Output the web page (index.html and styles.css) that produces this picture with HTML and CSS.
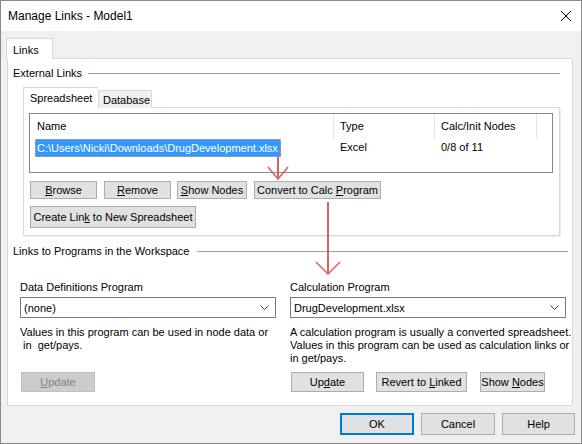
FILE: index.html
```html
<!DOCTYPE html>
<html>
<head>
<meta charset="utf-8">
<title>Manage Links - Model1</title>
<link rel="stylesheet" href="styles.css">
</head>
<body>
<div class="win">
  <div class="titlebar">
    <span class="title">Manage Links - Model1</span>
    <svg class="close" width="12" height="12" viewBox="0 0 12 12"><path d="M1 1 L11 11 M11 1 L1 11" stroke="#000" stroke-width="1" fill="none"/></svg>
  </div>
  <div class="body">
    <div class="tabs">
      <div class="tab sel">Links</div>
    </div>
    <div class="panel">
      <div class="grouphdr g1"><span>External Links</span><i class="rule"></i></div>
      <div class="itabs">
        <div class="itab sel">Spreadsheet</div>
        <div class="itab">Database</div>
      </div>
      <div class="ipanel">
        <div class="list">
          <div class="lhead">
            <div class="hc">Name</div>
            <div class="hc">Type</div>
            <div class="hc">Calc/Init Nodes</div>
          </div>
          <div class="lrow">
            <div class="rc"><span class="selname">C:\Users\Nicki\Downloads\DrugDevelopment.xlsx</span></div>
            <div class="rc">Excel</div>
            <div class="rc">0/8 of 11</div>
          </div>
        </div>
        <div class="brow r1">
          <button class="btn w-browse"><u>B</u>rowse</button>
          <button class="btn w-remove"><u>R</u>emove</button>
          <button class="btn w-shownodes"><u>S</u>how Nodes</button>
          <button class="btn w-convert">Convert to Calc <u>P</u>rogram</button>
        </div>
        <div class="brow r2">
          <button class="btn w-create">Create Lin<u>k</u> to New Spreadsheet</button>
        </div>
      </div>
      <div class="grouphdr g2"><span>Links to Programs in the Workspace</span><i class="rule"></i></div>
      <div class="cols">
        <div class="col left">
          <div class="lbl">Data Definitions Program</div>
          <div class="combo"><span>(none)</span><svg class="chev" width="9" height="5" viewBox="0 0 9 5"><path d="M0.5 0.5 L4.5 4.5 L8.5 0.5" stroke="#444" fill="none"/></svg></div>
          <div class="desc">Values in this program can be used in node data or<br> in  get/pays.</div>
          <div class="brow r3">
            <button class="btn dis w-upd1"><u>U</u>pdate</button>
          </div>
        </div>
        <div class="col right">
          <div class="lbl">Calculation Program</div>
          <div class="combo"><span>DrugDevelopment.xlsx</span><svg class="chev" width="9" height="5" viewBox="0 0 9 5"><path d="M0.5 0.5 L4.5 4.5 L8.5 0.5" stroke="#444" fill="none"/></svg></div>
          <div class="desc">A calculation program is usually a converted spreadsheet.<br>Values in this program can be used as calculation links or<br>in get/pays.</div>
          <div class="brow r3">
            <button class="btn w-upd2">Up<u>d</u>ate</button>
            <button class="btn w-revert">Revert to <u>L</u>inked</button>
            <button class="btn w-shown2">Show <u>N</u>odes</button>
          </div>
        </div>
      </div>
    </div>
    <div class="footer">
      <button class="btn fbtn ok">OK</button>
      <button class="btn fbtn">Cancel</button>
      <button class="btn fbtn help">Help</button>
    </div>
  </div>
  <svg class="arrows" width="582" height="444" viewBox="0 0 582 444">
    <g stroke="#e0605f" fill="none">
      <path d="M278 157 L278 179" stroke-width="2"/>
      <path d="M268 167 L278 179 L288 167" stroke-width="1.5"/>
      <path d="M328 202 L328 274" stroke-width="2"/>
      <path d="M316 262 L328 274 L340 262" stroke-width="1.5"/>
    </g>
  </svg>
</div>
</body>
</html>
```
FILE: styles.css
```css
* { box-sizing: border-box; }
html, body { margin: 0; padding: 0; }
body { width: 582px; height: 444px; overflow: hidden; font-family: "Liberation Sans", Arial, sans-serif; font-size: 11px; color: #000; }

.win { position: relative; width: 582px; height: 444px; border: 1px solid #8a8a8a; display: flex; flex-direction: column; background: #f0f0f0; }

.titlebar { height: 30px; background: #fff; display: flex; align-items: center; padding-left: 7px; }
.title { font-size: 12px; flex: 1; }
.close { margin-right: 9px; }

.body { flex: 1; padding-top: 7px; display: flex; flex-direction: column; }

.tabs { display: flex; padding-left: 5px; height: 20px; }
.tab { width: 47px; height: 21px; border: 1px solid #d9d9d9; border-bottom: none; background: #fff; padding: 5px 0 0 6px; position: relative; z-index: 1; }

.panel { margin-left: 6px; width: 566px; height: 348px; border: 1px solid #d9d9d9; background: #fff; }

.grouphdr { display: flex; align-items: center; height: 14px; padding-left: 5px; }
.grouphdr .rule { flex: 1; height: 1px; background: #a0a0a0; margin-left: 6px; }
.g1 { margin-top: 7px; }
.g1 .rule { margin-right: 12px; }
.g2 { margin-top: 8px; }
.g2 .rule { margin-right: 4px; margin-left: 8px; }

.itabs { display: flex; align-items: flex-end; margin-left: 15px; margin-top: 7px; height: 20px; }
.itab { height: 18px; margin-bottom: -1px; border: 1px solid #d9d9d9; border-bottom: none; background: #f0f0f0; padding: 3px 0 0 4px; width: 54px; }
.itab.sel { height: 21px; width: 75px; background: #fff; position: relative; z-index: 1; padding: 4px 0 0 6px; border-right: none; }

.ipanel { margin-left: 15px; width: 537px; border: 1px solid #d9d9d9; background: #fff; padding: 5px 6px 7px 5px; box-shadow: 1px 1px 0 #ececec; }

.list { width: 524px; height: 60px; border: 1px solid #828790; background: #fff; }
.lhead, .lrow { display: grid; grid-template-columns: 304px 101px 102px; }
.lhead { height: 25px; }
.hc { border-right: 1px solid #e5e5e5; padding: 6px 0 0 6px; }
.hc:first-child { padding-left: 7px; }
.lrow { height: 18px; }
.rc { padding: 2px 0 0 6px; }
.rc:first-child { padding: 0 0 0 5px; }
.selname { display: inline-block; height: 18px; background: #3399ff; color: #fff; border: 1px dotted #e8a040; padding: 2px 2px 0 1px; }

.btn { font-family: "Liberation Sans", Arial, sans-serif; font-size: 11px; color: #000; background: #e1e1e1; border: 1px solid #adadad; padding: 0; margin: 0; border-radius: 0; flex-shrink: 0; white-space: nowrap; text-align: center; }
.btn u { text-decoration: underline; }

.brow { display: flex; }
.r1 { margin-top: 8px; margin-left: 1px; }
.r1 .btn { height: 18px; }
.w-browse { width: 67px; }
.w-remove { width: 67px; margin-left: 7px; }
.w-shownodes { width: 70px; margin-left: 6px; }
.w-convert { width: 127px; margin-left: 7px; }
.r2 { margin-top: 7px; margin-left: 1px; }
.w-create { width: 166px; height: 22px; }

.cols { display: flex; padding-left: 12px; margin-top: 21px; }
.col.left { width: 256px; }
.col.right { width: 276px; margin-left: 14px; }
.lbl { height: 15px; line-height: 14px; padding-top: 1px; }
.combo { margin-top: 3px; height: 21px; border: 1px solid #7a7a7a; background: #fff; display: flex; align-items: center; justify-content: space-between; padding: 0 6px 0 3px; }
.desc { margin-top: 8px; height: 39px; line-height: 13px; white-space: pre; }
.r3 { margin-top: 7px; margin-left: 1px; }
.r3 .btn { height: 20px; }
.btn.dis { background: #cccccc; border-color: #bfbfbf; color: #838383; }
.w-upd1 { width: 74px; }
.w-upd2 { width: 73px; }
.w-revert { width: 91px; margin-left: 12px; }
.w-shown2 { width: 65px; margin-left: 13px; }

.footer { display: flex; justify-content: flex-end; margin-top: 7px; padding-right: 6px; }
.fbtn { width: 74px; height: 22px; margin-left: 7px; }
.fbtn.help { width: 73px; }
.fbtn.ok { border: 2px solid #0078d7; }

.arrows { position: absolute; left: -1px; top: -1px; pointer-events: none; }
```
